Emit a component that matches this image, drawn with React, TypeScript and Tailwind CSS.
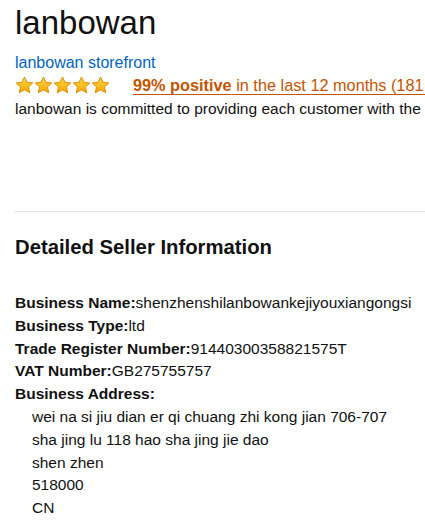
import { FC } from "react";

// Single gold star, Amazon-style
const Star: FC = () => (
  <svg width="19" height="18" viewBox="0 0 24 23">
    <defs>
      <linearGradient id="starFill" x1="0" y1="0" x2="0" y2="1">
        <stop offset="0%" stopColor="#ffd84d" />
        <stop offset="100%" stopColor="#f7a600" />
      </linearGradient>
    </defs>
    <path
      d="M12 1.2l3.2 6.9 7.4.8-5.5 5.1 1.6 7.4L12 17.6l-6.7 3.8 1.6-7.4L1.4 8.9l7.4-.8z"
      fill="url(#starFill)"
      stroke="#d88a00"
      strokeWidth="1.2"
      strokeLinejoin="round"
    />
  </svg>
);

const rows: { label: string; value: string }[] = [
  { label: "Business Name:", value: "shenzhenshilanbowankejiyouxiangongsi" },
  { label: "Business Type:", value: "ltd" },
  { label: "Trade Register Number:", value: "91440300358821575T" },
  { label: "VAT Number:", value: "GB275755757" },
];

const address = [
  "wei na si jiu dian er qi chuang zhi kong jian 706-707",
  "sha jing lu 118 hao sha jing jie dao",
  "shen zhen",
  "518000",
  "CN",
];

export default function App() {
  return (
    <div className="w-[425px] h-[523px] overflow-hidden bg-white text-[#111] font-['Liberation_Sans',Arial,sans-serif]">
      <div className="pl-[15px] whitespace-nowrap">
        <h1 className="text-[33px] leading-[40px] pt-[3px]">lanbowan</h1>

        <div className="mt-[10px] text-[16px] leading-[20px] text-[#0066c0]">lanbowan storefront</div>

        <div className="flex items-center h-[22px] mt-[1px]">
          <div className="flex">
            <Star />
            <Star />
            <Star />
            <Star />
            <Star />
          </div>
          <div className="w-px h-[18px] bg-[#d5d5d5] ml-[12px] mr-[11px]" />
          <a className="text-[16.3px] leading-[20px] text-[#c45500] underline underline-offset-[3px]">
            <span className="font-bold">99% positive</span> in the last 12 months (181 ratings)
          </a>
        </div>

        <p className="text-[15.5px] leading-[20px] mt-[3px]">
          lanbowan is committed to providing each customer with the highest standard of customer service.
        </p>
      </div>

      <div className="ml-[14px] mt-[92px] h-px bg-[#e7e7e7]" />

      <div className="pl-[15px] whitespace-nowrap">
        <h2 className="mt-[23px] text-[20.3px] leading-[24px] font-bold">Detailed Seller Information</h2>

        <div className="mt-[33px] text-[15.5px] leading-[22.8px]">
          {rows.map((r) => (
            <div key={r.label}>
              <span className="font-bold">{r.label}</span>
              {r.value}
            </div>
          ))}
          <div className="font-bold">Business Address:</div>
          <div className="pl-[17px]">
            {address.map((line) => (
              <div key={line}>{line}</div>
            ))}
          </div>
        </div>
      </div>
    </div>
  );
}
